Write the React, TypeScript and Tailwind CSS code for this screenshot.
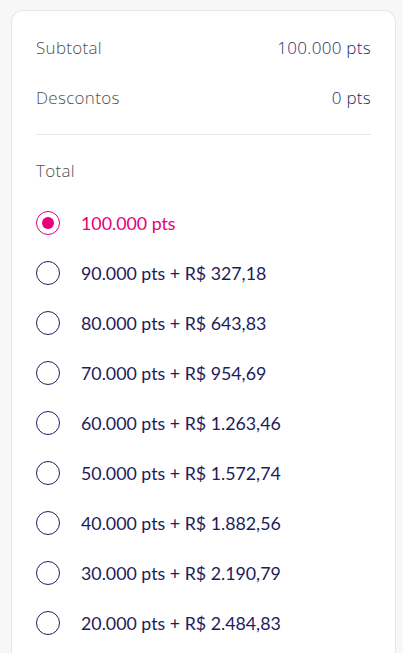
const options = [
  "100.000 pts",
  "90.000 pts + R$ 327,18",
  "80.000 pts + R$ 643,83",
  "70.000 pts + R$ 954,69",
  "60.000 pts + R$ 1.263,46",
  "50.000 pts + R$ 1.572,74",
  "40.000 pts + R$ 1.882,56",
  "30.000 pts + R$ 2.190,79",
  "20.000 pts + R$ 2.484,83",
];

function Radio({ checked }: { checked: boolean }) {
  return (
    <span
      className={
        checked
          ? "flex h-6 w-6 shrink-0 items-center justify-center rounded-full border-[1.5px] border-[#e5007d]"
          : "flex h-6 w-6 shrink-0 items-center justify-center rounded-full border-[1.5px] border-[#231c5c]"
      }
    >
      {checked && <span className="h-3 w-3 rounded-full bg-[#e5007d]" />}
    </span>
  );
}

export default function App() {
  const selected = 0;
  return (
    <div className="min-h-[653px] bg-[#f7f7f7] pl-[11px] pr-[7px] pt-[10px] font-['Lato',sans-serif]">
      <div className="rounded-t-xl border border-b-0 border-[#e6e6e6] bg-white px-6 pt-[26px] pb-4">
        <div className="flex items-center justify-between font-['Open_Sans',sans-serif] text-[17px] leading-[22px] font-light tracking-[0.3px]">
          <span className="text-[#4f4f4f]">Subtotal</span>
          <span className="text-[#2d2766]">100.000 pts</span>
        </div>
        <div className="mt-7 flex items-center justify-between font-['Open_Sans',sans-serif] text-[17px] leading-[22px] font-light tracking-[0.3px]">
          <span className="text-[#4f4f4f]">Descontos</span>
          <span className="text-[#2d2766]">0 pts</span>
        </div>
        <div className="mt-[25px] h-px bg-[#e6e6e6]" />
        <div className="mt-[25px] font-['Open_Sans',sans-serif] text-[17px] leading-[22px] font-light tracking-[0.3px] text-[#4f4f4f]">
          Total
        </div>
        <ul className="mt-[16px] flex flex-col">
          {options.map((o, i) => (
            <li key={o} className="flex h-[50px] items-center gap-[21px]">
              <Radio checked={i === selected} />
              <span
                className={
                  i === selected
                    ? "text-[17.8px] text-[#e5007d]"
                    : "text-[17.8px] text-[#231c5c]"
                }
              >
                {o}
              </span>
            </li>
          ))}
        </ul>
      </div>
    </div>
  );
}
